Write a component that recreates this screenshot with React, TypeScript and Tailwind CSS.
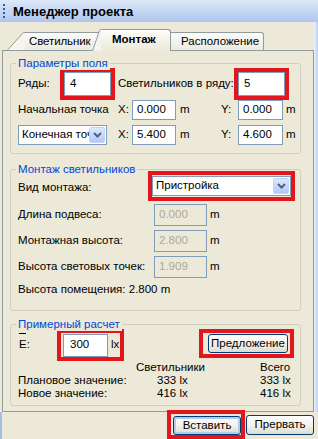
import React from "react";

const FONT = { fontFamily: '"Liberation Sans", Arial, sans-serif' };

function Chevron() {
  return (
    <svg width="9" height="6" viewBox="0 0 9 6" aria-hidden="true">
      <path d="M1 1L4.5 4.5L8 1" fill="none" stroke="#4d6185" strokeWidth="2" />
    </svg>
  );
}

function DropButton() {
  return (
    <div className="w-[16px] h-[16px] mr-px shrink-0 rounded-[2px] border border-[#c3d3f6] bg-gradient-to-b from-[#dde7fd] to-[#b3c8f7] flex items-center justify-center">
      <Chevron />
    </div>
  );
}

function Field({ value, cls, disabled = false }: { value: string; cls: string; disabled?: boolean }) {
  return (
    <div
      className={`shrink-0 border border-[#7f9db9] flex items-center pl-[4px] ${
        disabled ? "bg-[#ece9d8] text-[#aca899]" : "bg-white text-black"
      } ${cls}`}
    >
      {value}
    </div>
  );
}

function Select({ value, cls }: { value: string; cls: string }) {
  return (
    <div className={`shrink-0 border border-[#7f9db9] bg-white flex items-center ${cls}`}>
      <span className="flex-1 overflow-hidden whitespace-nowrap pl-[3px]">{value}</span>
      <DropButton />
    </div>
  );
}

function XPButton({ label, cls, focused = false }: { label: string; cls: string; focused?: boolean }) {
  return (
    <div
      className={`shrink-0 flex items-center justify-center rounded-[3px] border border-[#003c74] bg-gradient-to-b from-[#ffffff] via-[#f3f2ec] to-[#dedcd2] ${
        focused ? "shadow-[inset_0_0_0_2px_#b2c9f2]" : ""
      } ${cls}`}
    >
      {label}
    </div>
  );
}

function Group({ title, cls, children }: { title: string; cls: string; children: React.ReactNode }) {
  return (
    <div className={`relative ml-[7px] w-[291px] shrink-0 rounded-[3px] border border-[#d0d0bf] ${cls}`}>
      <span className="absolute left-[5px] -top-[7px] px-[2px] bg-[#ece9d8] text-[#0046d5] leading-[13px] whitespace-nowrap">
        {title}
      </span>
      {children}
    </div>
  );
}

function Label({ text, cls = "" }: { text: string; cls?: string }) {
  return <span className={`shrink-0 whitespace-nowrap ${cls}`}>{text}</span>;
}

export default function App() {
  return (
    <div
      className="w-[318px] h-[439px] bg-[#ece9d8] flex flex-col overflow-hidden text-[11.5px] leading-none text-black"
      style={FONT}
    >
      {/* Title bar */}
      <div className="h-[22px] shrink-0 flex items-center bg-gradient-to-b from-[#dde8f8] to-[#aec6ee]">
        <div className="ml-[3px] h-[14px] flex flex-col justify-between">
          <div className="w-[2px] h-[2px] bg-[#3c5a8c]" />
          <div className="w-[2px] h-[2px] bg-[#3c5a8c]" />
          <div className="w-[2px] h-[2px] bg-[#3c5a8c]" />
          <div className="w-[2px] h-[2px] bg-[#3c5a8c]" />
        </div>
        <span className="ml-[8px] font-bold text-[13px] whitespace-nowrap">Менеджер проекта</span>
      </div>

      {/* Main */}
      <div className="h-[390px] shrink-0 flex">
        <div className="w-[2px] shrink-0" />
        <div className="w-[312px] shrink-0 flex flex-col">
          {/* Tab strip */}
          <div className="h-[28px] shrink-0 flex items-end pl-[5px]">
            <div className="flex h-[18px]">
              <svg width="18" height="18" viewBox="0 0 18 18" aria-hidden="true">
                <path d="M0 18L15.5 1.5Q16.5 0.5 18 0.5L18 18Z" fill="#f6f5f0" />
                <path d="M0.5 18L15.5 1.5Q16.5 0.5 18 0.5" fill="none" stroke="#919b9c" />
              </svg>
              <div className="w-[76px] h-[18px] border-t border-r border-[#919b9c] rounded-tr-[3px] bg-gradient-to-b from-[#fbfbf9] to-[#ebeae3] pl-[4px] flex items-center whitespace-nowrap tracking-[-0.1px]">
                Светильник
              </div>
            </div>
            <div className="relative z-10 -ml-[9px] -mb-px flex h-[22px]">
              <svg width="9" height="22" viewBox="0 0 9 22" aria-hidden="true">
                <path d="M0 22L7.5 1.5Q8 0.5 9 0.5L9 22Z" fill="#f5f4ef" />
                <path d="M0.5 22L7.5 1.5Q8 0.5 9 0.5" fill="none" stroke="#919b9c" />
              </svg>
              <div className="w-[70px] h-[22px] border-t border-r border-[#919b9c] rounded-tr-[3px] bg-gradient-to-b from-[#fcfcfa] to-[#ece9d8] pl-[11px] pb-[2px] flex items-center font-bold">
                Монтаж
              </div>
            </div>
            <div className="w-[93px] h-[18px] border-t border-r border-[#919b9c] rounded-tr-[3px] bg-gradient-to-b from-[#fbfbf9] to-[#ebeae3] pl-[10px] flex items-center">
              Расположение
            </div>
          </div>

          {/* Tab panel */}
          <div className="h-[362px] shrink-0 border border-[#919b9c] bg-[#ece9d8] flex flex-col">
            {/* Group 1 */}
            <Group title="Параметры поля" cls="mt-[12px] h-[91px]">
              <div className="pl-[7px] pt-[4px] flex flex-col">
                <div className="h-[32px] flex items-center">
                  <Label text="Ряды:" cls="w-[42px]" />
                  <div className="shrink-0 border-4 border-[#e3161e]">
                    <Field value="4" cls="w-[47px] h-[24px] pl-[5px]" />
                  </div>
                  <Label text="Светильников в ряду:" cls="ml-[3px] w-[116px]" />
                  <div className="shrink-0 border-4 border-[#e3161e]">
                    <Field value="5" cls="w-[47px] h-[24px] pl-[5px]" />
                  </div>
                </div>
                <div className="h-[20px] flex items-center">
                  <Label text="Начальная точка" cls="w-[100px]" />
                  <Label text="X:" cls="w-[14px]" />
                  <Field value="0.000" cls="w-[44px] h-[20px]" />
                  <Label text="m" cls="ml-[4px] w-[41px]" />
                  <Label text="Y:" cls="w-[17px]" />
                  <Field value="0.000" cls="w-[45px] h-[20px]" />
                  <Label text="m" cls="ml-[3px]" />
                </div>
                <div className="mt-[5px] h-[20px] flex items-center">
                  <Select value="Конечная точка" cls="w-[89px] h-[20px]" />
                  <Label text="X:" cls="ml-[11px] w-[14px]" />
                  <Field value="5.400" cls="w-[44px] h-[20px]" />
                  <Label text="m" cls="ml-[4px] w-[41px]" />
                  <Label text="Y:" cls="w-[17px]" />
                  <Field value="4.600" cls="w-[45px] h-[20px]" />
                  <Label text="m" cls="ml-[3px]" />
                </div>
              </div>
            </Group>

            {/* Group 2 */}
            <Group title="Монтаж светильников" cls="mt-[15px] h-[142px]">
              <div className="pl-[7px] pt-px flex flex-col">
                <div className="h-[30px] flex items-center">
                  <Label text="Вид монтажа:" cls="w-[130px] pt-[4px]" />
                  <div className="shrink-0 border-4 border-[#e3161e] py-px">
                    <Select value="Пристройка" cls="w-[139px] h-[20px]" />
                  </div>
                </div>
                <div className="mt-[3px] flex flex-col gap-[4px]">
                  <div className="h-[22px] flex items-center">
                    <Label text="Длина подвеса:" cls="w-[136px]" />
                    <Field value="0.000" cls="w-[53px] h-[22px] pl-[3px]" disabled />
                    <Label text="m" cls="ml-[3px]" />
                  </div>
                  <div className="h-[22px] flex items-center">
                    <Label text="Монтажная высота:" cls="w-[136px]" />
                    <Field value="2.800" cls="w-[53px] h-[22px] pl-[3px]" disabled />
                    <Label text="m" cls="ml-[3px]" />
                  </div>
                  <div className="h-[22px] flex items-center">
                    <Label text="Высота световых точек:" cls="w-[136px]" />
                    <Field value="1.909" cls="w-[53px] h-[22px] pl-[3px]" disabled />
                    <Label text="m" cls="ml-[3px]" />
                  </div>
                </div>
                <div className="mt-[4px] h-[14px] leading-[14px] whitespace-nowrap">Высота помещения: 2.800 m</div>
                <div className="h-[3px] overflow-hidden">
                  <div className="-mt-[10px] leading-[13px] whitespace-nowrap">Рабочая высота: 0.850 m</div>
                </div>
              </div>
            </Group>

            {/* Group 3 */}
            <Group title="Примерный расчет" cls="mt-[13px] h-[82px]">
              <div className="pl-[7px] pt-[4px] flex flex-col">
                <div className="h-[32px] flex items-start">
                  <div className="w-[39px] h-[32px] shrink-0 flex items-center pl-px">
                    <span className="relative">
                      <span className="absolute left-0 -top-[6px] w-[7px] h-px bg-black" />
                      E:
                    </span>
                  </div>
                  <div className="shrink-0 h-[32px] border-4 border-[#e3161e] pl-[2px] pr-[1px] flex items-center">
                    <Field value="300" cls="w-[45px] h-[23px] pl-[6px]" />
                    <Label text="lx" cls="ml-[3px] w-[8px]" />
                  </div>
                  <div className="ml-[75px] shrink-0 h-[29px] border-4 border-[#e3161e] pl-[5px] pr-[2px] pt-px">
                    <XPButton label="Предложение" cls="w-[80px] h-[19px]" />
                  </div>
                </div>
                <div className="h-[13px] flex items-center">
                  <span className="w-[118px] shrink-0" />
                  <Label text="Светильники" cls="w-[124px]" />
                  <Label text="Всего" />
                </div>
                <div className="h-[13px] flex items-center">
                  <Label text="Плановое значение:" cls="w-[139px]" />
                  <Label text="333 lx" cls="w-[103px]" />
                  <Label text="333 lx" />
                </div>
                <div className="h-[13px] flex items-center">
                  <Label text="Новое значение:" cls="w-[139px]" />
                  <Label text="416 lx" cls="w-[103px]" />
                  <Label text="416 lx" />
                </div>
              </div>
            </Group>
          </div>
        </div>
        <div className="w-[4px] shrink-0 bg-gradient-to-r from-[#eef3fc] to-[#b9cef1]" />
      </div>

      {/* Bottom buttons */}
      <div className="h-[27px] shrink-0 flex items-start">
        <div className="w-[2px] h-[27px] shrink-0 bg-[#a3bde8]" />
        <div className="ml-[165px] -mt-[2px] shrink-0 h-[29px] border-4 border-[#e3161e] pl-[2px] pt-[2px]">
          <XPButton label="Вставить" cls="w-[68px] h-[19px]" focused />
        </div>
        <XPButton label="Прервать" cls="ml-px mt-[3px] w-[68px] h-[20px]" />
      </div>
    </div>
  );
}
